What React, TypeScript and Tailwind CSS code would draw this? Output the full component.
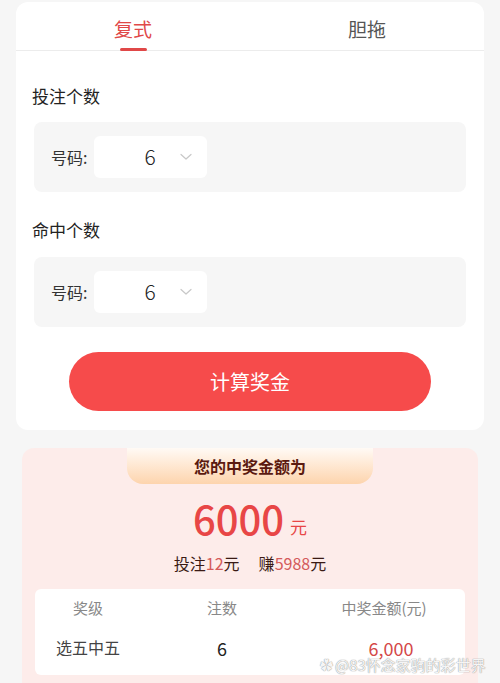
import React from "react";

const font = { fontFamily: '"Noto Sans CJK SC", "Noto Sans", sans-serif' };

function Chevron() {
  return (
    <svg width="12" height="8" viewBox="0 0 12 8" fill="none">
      <path d="M1 1.5 L6 6 L11 1.5" stroke="#c8c8c8" strokeWidth="1.2" strokeLinecap="round" strokeLinejoin="round" />
    </svg>
  );
}

function PickRow({ value }: { value: string }) {
  return (
    <div className="mx-[18px] flex h-[70px] items-center rounded-lg bg-[#f6f6f6] pl-[17px]">
      <span className="text-[16px] text-[#333]">号码:</span>
      <div className="ml-[7px] flex h-[42px] w-[113px] items-center rounded-md bg-white">
        <span className="ml-[50px] text-[21px] font-light text-[#222]">{value}</span>
        <span className="ml-[24px] flex items-center">
          <Chevron />
        </span>
      </div>
    </div>
  );
}

export default function App() {
  return (
    <div className="relative min-h-[683px] w-[500px] overflow-hidden bg-[#f6f6f6]" style={font}>
      {/* calculator card */}
      <div className="mx-4 mt-[2px] rounded-xl bg-white pb-[19px]">
        <div className="grid h-[49px] grid-cols-2 border-b border-[#ececec]">
          <div className="flex flex-col items-center justify-end">
            <span className="text-[19px] leading-none text-[#e04848]">复式</span>
            <span className="mb-[-1px] mt-[10px] h-[3px] w-[27px] rounded-full bg-[#e04848]" />
          </div>
          <div className="flex items-start justify-center pt-[17px]">
            <span className="text-[19px] leading-none text-[#555]">胆拖</span>
          </div>
        </div>

        <div className="pl-4 pt-[36px] text-[17px] leading-none text-[#222]">投注个数</div>
        <div className="mt-[18px]">
          <PickRow value="6" />
        </div>

        <div className="pl-4 pt-[29px] text-[17px] leading-none text-[#222]">命中个数</div>
        <div className="mt-[19px]">
          <PickRow value="6" />
        </div>

        <div className="mt-[25px] flex justify-center">
          <button className="flex h-[59px] w-[362px] items-center justify-center rounded-full bg-[#f64b4b] text-[20px] text-white">
            计算奖金
          </button>
        </div>
      </div>

      {/* result panel */}
      <div className="mx-[22px] mt-[18px] rounded-t-xl bg-[#fdecea] pb-6">
        <div className="flex justify-center">
          <div className="flex h-[36px] w-[246px] items-center justify-center rounded-b-[16px] bg-gradient-to-b from-[#fffaf5] to-[#fdd4ad]">
            <span className="text-[16px] font-bold text-[#5b1a10]">您的中奖金额为</span>
          </div>
        </div>

        <div className="mt-[14px] flex items-end justify-center leading-none">
          <span className="text-[40px] font-medium text-[#e84646]">6000</span>
          <span className="mb-[3px] ml-[6px] text-[17px] text-[#e84646]">元</span>
        </div>

        <div className="mt-[17px] flex justify-center gap-[19px] text-[16px] leading-none text-[#3a1a14]">
          <span>
            投注<span className="text-[#d45a5a]">12</span>元
          </span>
          <span>
            赚<span className="text-[#d45a5a]">5988</span>元
          </span>
        </div>

        <div className="mx-[13px] mt-[18px] rounded-md bg-white pb-[18px] pt-[8px]">
          <div className="grid grid-cols-[106px_162px_162px] text-[15px] text-[#888]">
            <span className="text-center">奖级</span>
            <span className="text-center">注数</span>
            <span className="text-center">中奖金额(元)</span>
          </div>
          <div className="mt-[19px] grid grid-cols-[106px_162px_162px] text-[16px] leading-none">
            <span className="text-center text-[#444]">选五中五</span>
            <span className="text-center text-[18px] text-[#222]">6</span>
            <span className="pl-[14px] text-center text-[18px] text-[#d44848]">6,000</span>
          </div>
        </div>
      </div>

      {/* watermark */}
      <div
        className="absolute left-[320px] top-[656px] flex items-center gap-[2px] text-[15px] leading-[18px] text-white/90"
        style={{ textShadow: "0 0 1px #999, 0 0 1px #999" }}
      >
        <span className="text-[13px]">✿</span>
        <span>@83怀念家驹的彩世界</span>
      </div>
    </div>
  );
}
